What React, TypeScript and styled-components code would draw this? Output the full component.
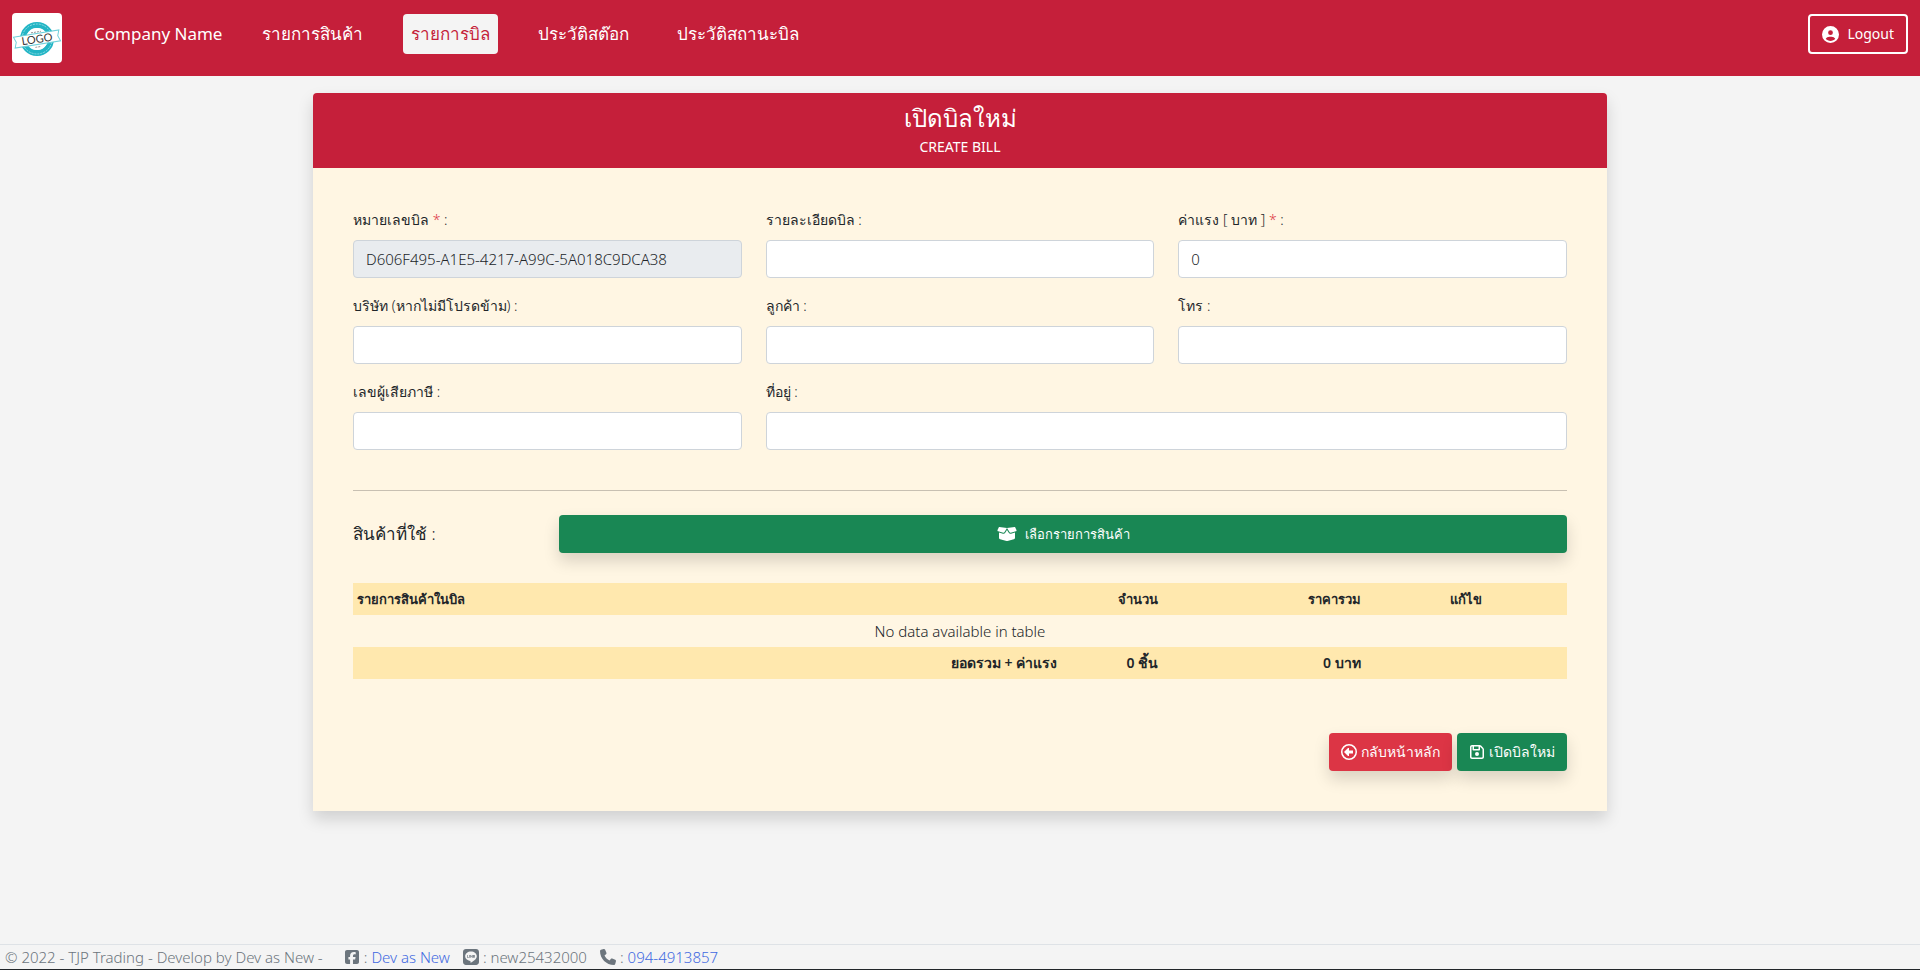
import React from "react";
import styled, { createGlobalStyle, css } from "styled-components";
import {
  FaBoxOpen,
  FaCircleUser,
  FaLine,
  FaPhone,
  FaRegCircleLeft,
  FaRegFloppyDisk,
  FaSquareFacebook,
} from "react-icons/fa6";

const GlobalStyle = createGlobalStyle`
  *, *::before, *::after { box-sizing: border-box; }
  body {
    margin: 0;
    background: #f4f4f4;
    color: #212529;
    font-family: "Noto Sans", "Open Sans", sans-serif;
    font-size: 15px;
    font-weight: 300;
    line-height: 24px;
  }
  button, input { font: inherit; }
`;

const Page = styled.div`
  min-height: 100vh;
  display: flex;
  flex-direction: column;
`;

const NavBar = styled.header`
  display: flex;
  align-items: flex-start;
  height: 76px;
  padding: 13px 12px 0;
  background: #c51f3a;
`;

const LogoLink = styled.a`
  display: block;
  width: 50px;
  height: 50px;
  margin-right: 32px;
  border-radius: 4px;
  overflow: hidden;
`;

const NavLinks = styled.nav`
  display: flex;
  flex: 1;
  gap: 32px;
  padding-top: 1px;
`;

const NavLink = styled.a<{ $active?: boolean }>`
  height: 40px;
  padding: 5px 8px;
  border-radius: 4px;
  font-size: 17px;
  font-weight: 400;
  line-height: 30px;
  text-decoration: none;
  white-space: nowrap;
  color: #fff;
  ${(p) =>
    p.$active &&
    css`
      background: #f4f4f4;
      color: #c51f3a;
      font-weight: 300;
    `}
`;

const Brand = styled(NavLink)`
  padding: 5px 0;
`;

const LogoutButton = styled.button`
  display: flex;
  align-items: center;
  gap: 8px;
  height: 40px;
  margin-top: 1px;
  padding: 0 12px;
  border: 2px solid #fff;
  border-radius: 4px;
  background: transparent;
  color: #fff;
  font-size: 14px;
  font-weight: 400;
`;

const Main = styled.main`
  flex: 1;
  padding: 17px 24px 40px;
`;

const Card = styled.section`
  max-width: 1294px;
  margin: 0 auto;
  border-radius: 4px 4px 0 0;
  background: #fff6e3;
  box-shadow: 0 8px 16px rgba(0, 0, 0, 0.15);
`;

const CardHeader = styled.div`
  height: 75px;
  padding-top: 8px;
  border-radius: 4px 4px 0 0;
  background: #c51f3a;
  color: #fff;
  text-align: center;
`;

const Title = styled.h1`
  margin: 0;
  font-size: 24px;
  font-weight: 400;
  line-height: 34px;
`;

const Subtitle = styled.p`
  margin: 0;
  font-size: 14px;
  font-weight: 400;
`;

const CardBody = styled.form`
  padding: 40px;
`;

const FieldGrid = styled.div`
  display: grid;
  grid-template-columns: repeat(3, 1fr);
  gap: 16px 24px;
`;

const Field = styled.div<{ $wide?: boolean }>`
  display: flex;
  flex-direction: column;
  gap: 8px;
  grid-column: ${(p) => (p.$wide ? "span 2" : "auto")};
`;

const Label = styled.label`
  font-size: 14px;
  white-space: nowrap;
`;

const Required = styled.span`
  color: #dc3545;
`;

const Input = styled.input`
  width: 100%;
  height: 38px;
  padding: 6px 12px;
  border: 1px solid #ced4da;
  border-radius: 4px;
  background: #fff;
  color: #212529;
  &:read-only { background: #e9ecef; }
`;

const Divider = styled.hr`
  height: 1px;
  margin: 40px 0 24px;
  border: 0;
  background: #c8c0b2;
`;

const PickerRow = styled.div`
  display: grid;
  grid-template-columns: repeat(12, 1fr);
  column-gap: 24px;
  align-items: center;
`;

const PickerLabel = styled.h2`
  grid-column: span 2;
  margin: 0;
  font-size: 17px;
  font-weight: 300;
  line-height: 24px;
  white-space: nowrap;
`;

const Button = styled.button<{ $tone: "green" | "red" }>`
  display: flex;
  align-items: center;
  justify-content: center;
  gap: 4px;
  height: 38px;
  padding: 0 12px;
  border: 0;
  border-radius: 4px;
  background: ${(p) => (p.$tone === "green" ? "#198754" : "#dc3545")};
  box-shadow: 0 8px 16px rgba(0, 0, 0, 0.15);
  color: #fff;
  font-size: 14px;
  font-weight: 400;
  white-space: nowrap;
`;

const PickerButton = styled(Button)`
  grid-column: span 10;
  gap: 8px;
  font-size: 13px;
`;

const Table = styled.table`
  width: 100%;
  margin-top: 30px;
  border-collapse: collapse;
  table-layout: fixed;
`;

const BandRow = styled.tr`
  background: #ffe8ae;
`;

const HeadCell = styled.th<{ $align?: string; $width?: string }>`
  width: ${(p) => p.$width ?? "auto"};
  height: 32px;
  padding: 4px;
  font-size: 13px;
  font-weight: 600;
  text-align: ${(p) => p.$align ?? "left"};
`;

const TotalCell = styled.td`
  height: 32px;
  padding: 4px;
  font-size: 14px;
  font-weight: 600;
  text-align: right;
`;

const EmptyCell = styled.td`
  height: 32px;
  padding: 4px;
  text-align: center;
`;

const Actions = styled.div`
  display: flex;
  justify-content: flex-end;
  gap: 5px;
  margin-top: 54px;
`;

const Footer = styled.footer`
  display: flex;
  align-items: center;
  gap: 13px;
  height: 26px;
  padding: 0 5px;
  border-top: 1px solid #dee2e6;
  border-bottom: 1px solid #212529;
  color: #6c757d;
  white-space: nowrap;
`;

const Copyright = styled.span`
  padding-right: 8px;
`;

const Contact = styled.span`
  display: flex;
  align-items: center;
  gap: 4px;
`;

const FooterLink = styled.a`
  color: #4169e1;
  text-decoration: none;
`;

function Logo() {
  return (
    <svg width="50" height="50" viewBox="0 0 50 50" role="img" aria-label="Logo">
      <rect width="50" height="50" fill="#fff" />
      <circle cx="25" cy="26" r="14" fill="none" stroke="#23b5c5" strokeWidth="6" />
      <circle cx="25" cy="26" r="15" fill="none" stroke="#8fdbe3" strokeWidth="1" strokeDasharray="2 1" />
      <circle cx="25" cy="26" r="11" fill="#fff" />
      <g transform="rotate(-9 25 26)">
        <path d="M2 20.500h46l-2 5.500 2 5.500H2l2-5.500z" fill="#fff" stroke="#6fd0da" />
        <text x="25" y="30" textAnchor="middle" fontFamily="Lato, sans-serif" fontSize="11" fontWeight="400" fill="#333" textRendering="geometricPrecision">
          LOGO
        </text>
        <path d="M20 19h10M22 34h6" stroke="#999" strokeDasharray="2 1" />
      </g>
    </svg>
  );
}

const navItems = [
  { label: "รายการสินค้า" },
  { label: "รายการบิล", active: true },
  { label: "ประวัติสต๊อก" },
  { label: "ประวัติสถานะบิล" },
];

const fields = [
  { id: "billNo", label: "หมายเลขบิล", required: true, value: "D606F495-A1E5-4217-A99C-5A018C9DCA38", readOnly: true },
  { id: "detail", label: "รายละเอียดบิล" },
  { id: "wage", label: "ค่าแรง [ บาท ]", required: true, value: "0" },
  { id: "company", label: "บริษัท (หากไม่มีโปรดข้าม)" },
  { id: "customer", label: "ลูกค้า" },
  { id: "phone", label: "โทร" },
  { id: "taxId", label: "เลขผู้เสียภาษี" },
  { id: "address", label: "ที่อยู่", wide: true },
];

export default function App() {
  return (
    <Page>
      <GlobalStyle />
      <NavBar>
        <LogoLink href="#"><Logo /></LogoLink>
        <NavLinks>
          <Brand href="#">Company Name</Brand>
          {navItems.map((item) => (
            <NavLink key={item.label} href="#" $active={item.active}>{item.label}</NavLink>
          ))}
        </NavLinks>
        <LogoutButton type="button"><FaCircleUser size={17} />Logout</LogoutButton>
      </NavBar>
      <Main>
        <Card>
          <CardHeader>
            <Title>เปิดบิลใหม่</Title>
            <Subtitle>CREATE BILL</Subtitle>
          </CardHeader>
          <CardBody>
            <FieldGrid>
              {fields.map((f) => (
                <Field key={f.id} $wide={f.wide}>
                  <Label htmlFor={f.id}>
                    {f.label} {f.required && <Required>* </Required>}:
                  </Label>
                  <Input id={f.id} defaultValue={f.value} readOnly={f.readOnly} />
                </Field>
              ))}
            </FieldGrid>
            <Divider />
            <PickerRow>
              <PickerLabel>สินค้าที่ใช้ :</PickerLabel>
              <PickerButton type="button" $tone="green"><FaBoxOpen size={20} />เลือกรายการสินค้า</PickerButton>
            </PickerRow>
            <Table>
              <thead>
                <BandRow>
                  <HeadCell $width="58.33%">รายการสินค้าในบิล</HeadCell>
                  <HeadCell $width="8.33%" $align="right">จำนวน</HeadCell>
                  <HeadCell $width="16.67%" $align="right">ราคารวม</HeadCell>
                  <HeadCell $align="center">แก้ไข</HeadCell>
                </BandRow>
              </thead>
              <tbody>
                <tr><EmptyCell colSpan={4}>No data available in table</EmptyCell></tr>
              </tbody>
              <tfoot>
                <BandRow>
                  <TotalCell>ยอดรวม + ค่าแรง</TotalCell>
                  <TotalCell>0 ชิ้น</TotalCell>
                  <TotalCell>0 บาท</TotalCell>
                  <TotalCell />
                </BandRow>
              </tfoot>
            </Table>
            <Actions>
              <Button type="button" $tone="red"><FaRegCircleLeft size={16} />กลับหน้าหลัก</Button>
              <Button type="submit" $tone="green"><FaRegFloppyDisk size={16} />เปิดบิลใหม่</Button>
            </Actions>
          </CardBody>
        </Card>
      </Main>
      <Footer>
        <Copyright>© 2022 - TJP Trading - Develop by Dev as New -</Copyright>
        <Contact><FaSquareFacebook size={16} />: <FooterLink href="#">Dev as New</FooterLink></Contact>
        <Contact><FaLine size={16} />: new25432000</Contact>
        <Contact><FaPhone size={16} />: <FooterLink href="tel:0944913857">094-4913857</FooterLink></Contact>
      </Footer>
    </Page>
  );
}
